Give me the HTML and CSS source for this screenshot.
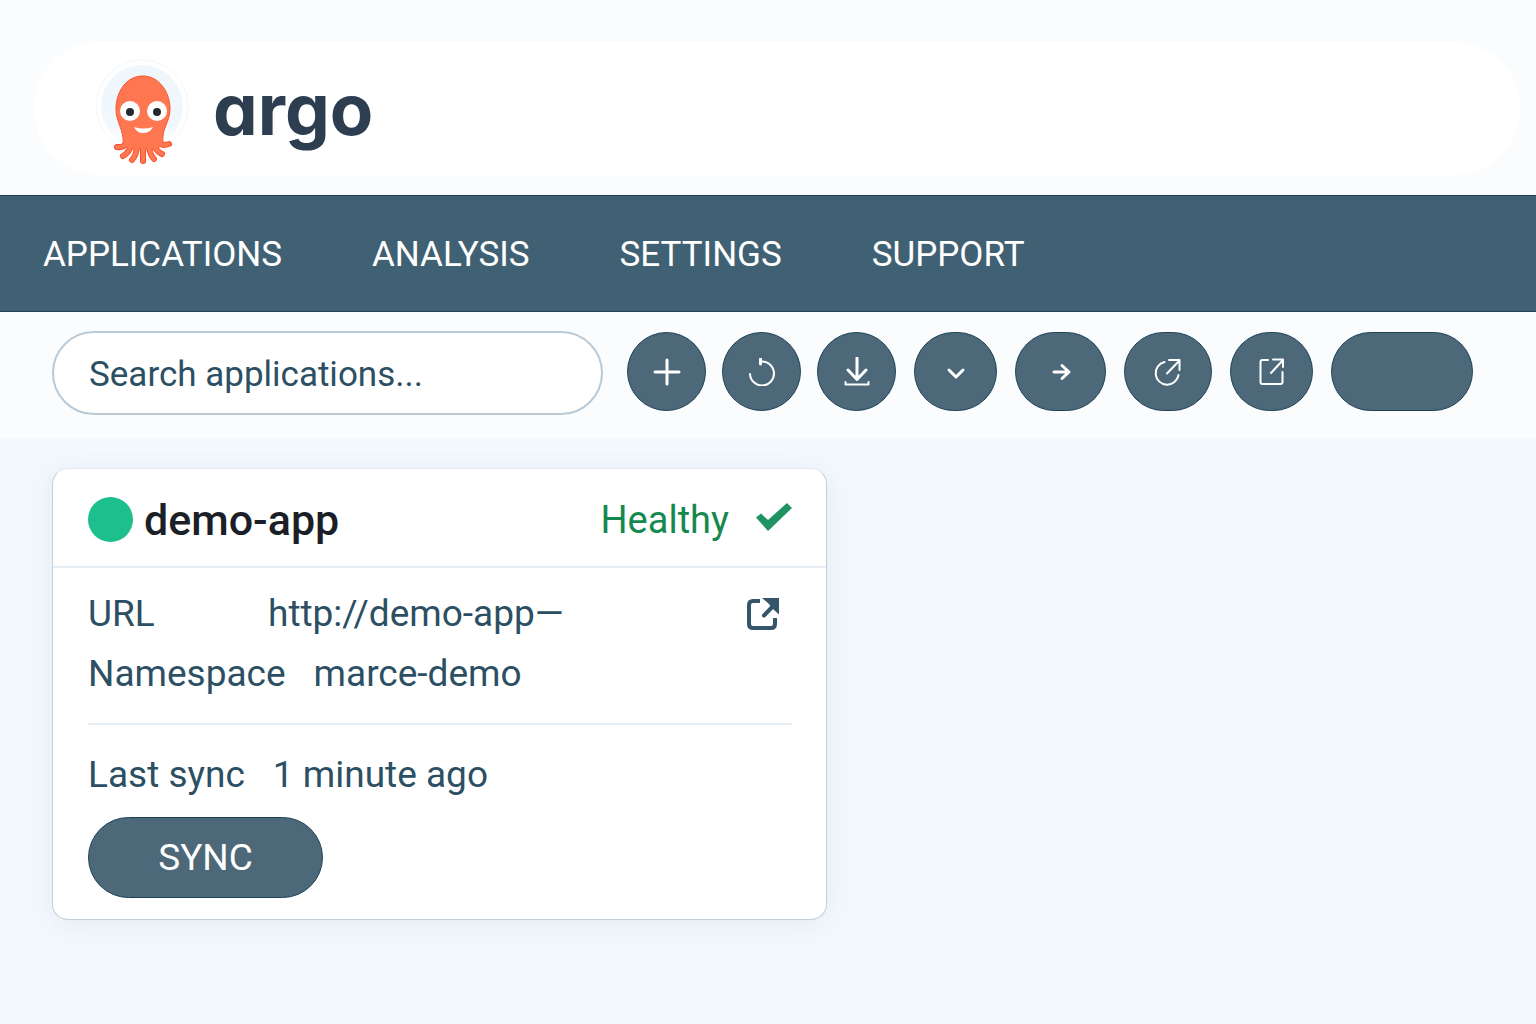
FILE: index.html
```html
<!DOCTYPE html>
<html lang="en">
<head>
<meta charset="utf-8">
<meta name="viewport" content="width=device-width, initial-scale=1">
<title>Argo – Applications</title>
<link rel="stylesheet" href="styles.css">
</head>
<body>
<header class="masthead">
  <div class="brand">
    <svg class="brand-logo" width="94" height="108" viewBox="0 -1 94 108" aria-hidden="true">
      <defs>
        <linearGradient id="halo" x1="0" y1="0" x2="0" y2="1">
          <stop offset="0" stop-color="#eff6fc"/>
          <stop offset="0.75" stop-color="#f1f8fd"/>
          <stop offset="1" stop-color="#fff"/>
        </linearGradient>
      </defs>
      <circle cx="47" cy="46" r="46" fill="#fff" stroke="#f3f7fb"/>
      <circle cx="47" cy="46" r="41" fill="url(#halo)"/>
      <g fill="none" stroke="#f9502b" stroke-width="6" stroke-linecap="round">
        <path d="M32 80Q31 88 22 87M36 84Q35 92 28 96M42 87Q41 96 37 100M48 87V101M54 87Q55 95 59 99M59 85Q61 91 67 94M63 80Q65 87 74 84"/>
      </g>
      <path d="M48 16C31 16 21 32 21 49C21 60 27 68 28 78Q29 83 27 85L34 89H62L69 83Q67 81 68 76C69 66 75 60 75 49C75 32 64 16 48 16Z" fill="#ff7750" stroke="#f9552f" stroke-width="1"/>
      <g fill="none" stroke="#ff7750" stroke-width="4" stroke-linecap="round">
        <path d="M32 80Q31 88 22 87M36 84Q35 92 28 96M42 87Q41 96 37 100M48 87V101M54 87Q55 95 59 99M59 85Q61 91 67 94M63 80Q65 87 74 84"/>
      </g>
      <circle cx="35" cy="51" r="10" fill="#fff"/>
      <circle cx="62" cy="51" r="10" fill="#fff"/>
      <circle cx="35" cy="52" r="4" fill="#25292d"/>
      <circle cx="62" cy="52" r="4" fill="#25292d"/>
      <path d="M39 67Q48 70 58 67Q55 73 48 73Q42 73 39 67Z" fill="#fff"/>
    </svg>
    <span class="brand-name">argo</span>
  </div>
</header>

<nav class="main-nav">
  <a href="#applications">APPLICATIONS</a>
  <a href="#analysis">ANALYSIS</a>
  <a href="#settings">SETTINGS</a>
  <a href="#support">SUPPORT</a>
</nav>

<div class="toolbar">
  <input class="search" type="text" placeholder="Search applications..." aria-label="Search applications">
  <div class="actions">
    <div class="action-group">
      <button class="action" type="button" aria-label="New application">
        <svg width="28" height="28" viewBox="0 0 28 28"><path d="M14 2V26M2 14H26" stroke-width="3"/></svg>
      </button>
      <button class="action" type="button" aria-label="Refresh">
        <svg width="28" height="28" viewBox="0 0 28 28"><path d="M2 16A12 12 0 1 0 14 3.500H12" stroke-width="2"/><path d="M12.500 1V6" stroke-width="3"/></svg>
      </button>
      <button class="action" type="button" aria-label="Download">
        <svg width="28" height="30" viewBox="0 0 28 30"><path d="M14 1V22M5 13L14 22.500L23 13" stroke-width="3"/><path d="M2.500 25V27.500H25.500V25" stroke-width="2"/></svg>
      </button>
    </div>
    <button class="action action-menu" type="button" aria-label="More options">
      <svg width="28" height="28" viewBox="0 0 28 28"><path d="M7 12L14 19L21 12" stroke-width="3"/></svg>
    </button>
    <button class="action action-next" type="button" aria-label="Next">
      <svg width="28" height="28" viewBox="0 0 28 28"><path d="M7 14H22M15 7.500L22 14L15 20.500" stroke-width="3"/></svg>
    </button>
    <button class="action action-share" type="button" aria-label="Share">
      <svg width="28" height="28" viewBox="0 0 28 28"><path d="M10.500 4A11.500 11.500 0 1 0 24.500 17" stroke-width="2"/><path d="M13 15.500L25 3M15 2H25.500V12" stroke-width="2"/></svg>
    </button>
    <button class="action action-open" type="button" aria-label="Open in new window">
      <svg width="28" height="28" viewBox="0 0 28 28"><path d="M10 2H4.500Q2.500 2 2.500 4V24Q2.500 26 4.500 26H22.500Q24.500 26 24.500 24V14" stroke-width="2"/><path d="M13 15L25 2M15 1.500H25V9" stroke-width="2"/></svg>
    </button>
    <button class="action action-blank" type="button" aria-label="View"></button>
  </div>
</div>

<main class="content">
  <article class="card">
    <header class="card-head">
      <span class="status-dot"></span>
      <h2 class="card-title">demo-app</h2>
      <span class="health">Healthy</span>
      <svg width="36" height="34" viewBox="0 0 36 34" aria-hidden="true"><path d="M0 14.500L5 10.500L12 17L31 0L36 5L12 28Z" fill="#1d9462"/></svg>
    </header>
    <div class="card-body">
      <dl class="details">
        <div class="row">
          <dt>URL</dt>
          <dd>http://demo-app—</dd>
          <dd class="row-end">
            <a class="open-link" href="#demo-app" aria-label="Open demo-app">
              <svg width="34" height="34" viewBox="0 0 34 34"><path d="M14 4H7Q3 4 3 8V27Q3 31 7 31H25Q29 31 29 27V21" fill="none" stroke="#35566a" stroke-width="4"/><path d="M18 18.500L28 8" fill="none" stroke="#35566a" stroke-width="4" stroke-linecap="round"/><path d="M16 1H33V17.500L28 13L22 6Z" fill="#35566a"/></svg>
            </a>
          </dd>
        </div>
        <div class="row">
          <dt>Namespace</dt>
          <dd>marce-demo</dd>
        </div>
      </dl>
      <dl class="details sync-info">
        <div class="row">
          <dt>Last sync</dt>
          <dd>1 minute ago</dd>
        </div>
      </dl>
      <button class="sync" type="button">SYNC</button>
    </div>
  </article>
</main>
</body>
</html>
```
FILE: styles.css
```css
* {
  box-sizing: border-box;
}

body {
  margin: 0;
  min-height: 100vh;
  background: #f3f8fd;
  color: #2c4f63;
  font-family: Roboto, "Liberation Sans", sans-serif;
  font-size: 37px;
  line-height: 60px;
}

svg {
  display: block;
  flex: none;
}

.masthead {
  padding: 42px 16px 20px 34px;
  background: #fbfcfe;
}

.brand {
  display: flex;
  align-items: center;
  gap: 24px;
  height: 133px;
  padding: 0 61px;
  border-radius: 67px;
  background: #fff;
}

.brand-logo {
  margin-top: 8px;
}

.brand-name {
  color: #2c3e50;
  font-family: Inter, sans-serif;
  font-size: 71px;
  font-weight: 700;
  font-feature-settings: "cv11";
  line-height: 80px;
}

.main-nav {
  display: flex;
  align-items: center;
  gap: 90px;
  height: 117px;
  padding: 3px 43px 0;
  border-top: 1px solid #1d4258;
  border-bottom: 1px solid #1d4258;
  background: #3f6173;
  font-size: 35px;
}

.main-nav a {
  color: #fff;
  text-decoration: none;
}

.toolbar {
  display: flex;
  gap: 24px;
  padding: 19px 52px 23px;
  background: #fbfcfe;
}

.search {
  flex: 0 1 551px;
  min-width: 0;
  height: 84px;
  padding: 3px 35px 0;
  border: 2px solid #b9cad6;
  border-radius: 42px;
  background: #fff;
  color: #2c4f63;
  font: inherit;
  font-size: 35px;
}

.search::placeholder {
  color: #2c4f63;
  opacity: 1;
}

.actions {
  display: flex;
  gap: 18px;
  padding-top: 1px;
}

.action-group {
  display: flex;
  gap: 16px;
}

.action,
.sync {
  display: flex;
  align-items: center;
  justify-content: center;
  padding: 0;
  border: 1px solid #1d4258;
  border-radius: 41px;
  background: #4c6879;
  color: #fff;
  font: inherit;
}

.action {
  width: 79px;
  height: 79px;
}

.action svg {
  fill: none;
  stroke: #fff;
  stroke-linecap: round;
  stroke-linejoin: round;
}

.action-menu,
.action-open {
  width: 83px;
}

.action-next {
  width: 91px;
}

.action-share {
  width: 88px;
}

.action-blank {
  width: 142px;
}

.content {
  padding: 30px 52px;
}

.card {
  width: 775px;
  max-width: 100%;
  border: 1px solid #c3d0d9;
  border-top-color: #dfe8f0;
  border-radius: 16px;
  background: #fff;
  box-shadow: 0 4px 28px rgba(60, 90, 120, 0.08);
}

.card-head {
  display: flex;
  align-items: center;
  height: 99px;
  padding: 4px 34px 0 35px;
  border-bottom: 2px solid #e8eef5;
}

.status-dot {
  width: 45px;
  height: 45px;
  margin-right: 11px;
  border-radius: 50%;
  background: #1dbf8c;
}

.card-title {
  margin: 0;
  color: #1b1f27;
  font-size: 43px;
  font-weight: 500;
}

.health {
  margin: 0 27px 0 auto;
  color: #16884f;
  font-size: 38px;
}

.card-body {
  padding: 16px 34px 21px 35px;
}

.details {
  margin: 0;
}

.row {
  display: flex;
  gap: 28px;
}

.row dt {
  min-width: 152px;
}

.row dd {
  margin: 0;
}

.row .row-end {
  display: flex;
  align-items: center;
  margin-left: auto;
  padding-right: 12px;
}

.sync-info {
  margin-top: 19px;
  padding: 20px 0 12px;
  border-top: 2px solid #e8eef5;
}

.sync {
  width: 235px;
  height: 81px;
}
```
